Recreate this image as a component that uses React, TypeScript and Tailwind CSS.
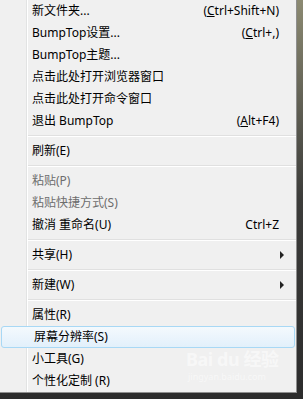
import React from 'react';

type Item =
  | { kind: 'sep' }
  | {
      kind: 'item';
      label: string;
      shortcut?: React.ReactNode;
      disabled?: boolean;
      submenu?: boolean;
      active?: boolean;
    };

const items: Item[] = [
  { kind: 'item', label: '新文件夹...', shortcut: <>(<u>C</u>trl+Shift+N)</> },
  { kind: 'item', label: 'BumpTop设置...', shortcut: <>(<u>C</u>trl+,)</> },
  { kind: 'item', label: 'BumpTop主题...' },
  { kind: 'item', label: '点击此处打开浏览器窗口' },
  { kind: 'item', label: '点击此处打开命令窗口' },
  { kind: 'item', label: '退出 BumpTop', shortcut: <>(<u>A</u>lt+F4)</> },
  { kind: 'sep' },
  { kind: 'item', label: '刷新(E)' },
  { kind: 'sep' },
  { kind: 'item', label: '粘贴(P)', disabled: true },
  { kind: 'item', label: '粘贴快捷方式(S)', disabled: true },
  { kind: 'item', label: '撤消 重命名(U)', shortcut: 'Ctrl+Z' },
  { kind: 'sep' },
  { kind: 'item', label: '共享(H)', submenu: true },
  { kind: 'sep' },
  { kind: 'item', label: '新建(W)', submenu: true },
  { kind: 'sep' },
  { kind: 'item', label: '属性(R)' },
  { kind: 'item', label: '屏幕分辨率(S)', active: true },
  { kind: 'item', label: '小工具(G)' },
  { kind: 'item', label: '个性化定制 (R)' },
];

export default function App() {
  return (
    <div
      className="relative w-[303px] h-[399px] overflow-hidden bg-gradient-to-b from-[#8c8a72] via-[#3c3c3a] to-[#2c2c2c] text-[12px] leading-none"
      style={{ fontFamily: '"Noto Sans", "Noto Sans CJK SC", sans-serif' }}
    >
      <div className="relative w-[297px] h-[393px] bg-[#f0f0f0] border-r border-b border-[#8e8e8e] flex flex-col">
        {/* gutter line */}
        <div className="absolute left-[26px] top-0 bottom-0 w-[2px] flex">
          <div className="w-px bg-[#e2e3e3]" />
          <div className="w-px bg-white" />
        </div>

        {items.map((it, i) =>
          it.kind === 'sep' ? (
            <div key={i} className="h-[8px] pl-[28px] flex flex-col justify-center">
              <div className="h-px bg-[#e0e0e0]" />
              <div className="h-px bg-white" />
            </div>
          ) : (
            <div
              key={i}
              className={`relative h-[22px] flex items-center pl-[32px] pr-[17px] ${
                it.active
                  ? 'mx-[1px] pl-[31px] pr-[16px] rounded-[3px] border border-[#a8d8f5] bg-gradient-to-b from-[#f4f9fd] to-[#e2f0fb]'
                  : ''
              } ${it.disabled ? 'text-[#6d6d6d]' : 'text-black'}`}
            >
              <span className="flex-1 whitespace-nowrap">{it.label}</span>
              {it.shortcut && <span className="whitespace-nowrap">{it.shortcut}</span>}
              {it.submenu && (
                <svg width="5" height="8" viewBox="0 0 5 8" className="mr-[-6px]">
                  <path d="M0 0 L4 4 L0 8 Z" fill="#222" />
                </svg>
              )}
            </div>
          )
        )}

        {/* watermark */}
        <div className="absolute left-[186px] top-[350px] text-white/50 pointer-events-none">
          <div className="text-[18px] leading-[18px] font-bold tracking-tight">Bai du 经验</div>
          <div className="text-[9px] leading-[9px] mt-[4px] ml-[2px]">jingyan.baidu.com</div>
        </div>
      </div>
    </div>
  );
}
